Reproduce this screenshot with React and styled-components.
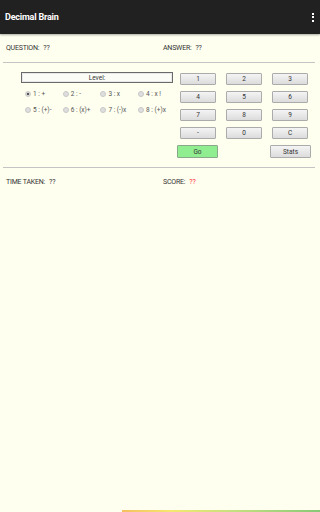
import React from 'react';
import styled, { createGlobalStyle } from 'styled-components';

const Global = createGlobalStyle`
    html, body {
        margin: 0;
        padding: 0;
        background: #fffff0;
    }
    body {
        font-family: Roboto, "Liberation Sans", sans-serif;
    }
`;

const Page = styled.div`
    width: 320px;
    height: 512px;
    display: flex;
    flex-direction: column;
    background: #fffff0;
    overflow: hidden;
`;

const AppBar = styled.div`
    height: 34px;
    flex: none;
    display: flex;
    align-items: center;
    justify-content: space-between;
    padding: 0 6px 0 5px;
    background: #212121;
    box-shadow: 0 1px 2px rgba(0, 0, 0, 0.35);
    color: #fff;
    font-size: 9px;
    font-weight: bold;
    letter-spacing: -0.2px;
`;

const Kebab = styled.div`
    display: flex;
    flex-direction: column;
    gap: 1.5px;
    span {
        width: 2px;
        height: 2px;
        background: #fff;
    }
`;

const InfoRow = styled.div`
    height: 28px;
    display: grid;
    grid-template-columns: 157px 1fr;
    align-items: center;
    padding-left: 6px;
    font-size: 7px;
    color: #333;
    letter-spacing: -0.2px;
`;

const Value = styled.span`
    margin-left: 4px;
    color: ${props => props.red ? '#ff3030' : '#333'};
`;

const Divider = styled.div`
    height: 1px;
    margin: 0 5px 0 3px;
    background: #c4c4c4;
`;

const Middle = styled.div`
    display: flex;
    padding: 9px 0 0 21px;
    height: 95px;
`;

const LevelPanel = styled.div`
    width: 152px;
`;

const LevelBox = styled.div`
    height: 9px;
    border: 1px solid #6a6a6a;
    box-shadow: inset 0 0 0 1px #e8e8e8;
    background: #fcfcf6;
    display: flex;
    align-items: center;
    justify-content: center;
    font-size: 6.5px;
    color: #333;
`;

const RadioGrid = styled.div`
    display: grid;
    grid-template-columns: repeat(4, 37.7px);
    grid-auto-rows: 16px;
    padding: 3px 0 0 4px;
    align-items: center;
`;

const Radio = styled.div`
    display: flex;
    align-items: center;
    gap: 2px;
    font-size: 6.5px;
    color: #555;
    white-space: nowrap;
`;

const Dot = styled.span`
    width: 4px;
    height: 4px;
    border-radius: 50%;
    border: 0.5px solid #c8c8c8;
    background: ${props => props.on ? 'radial-gradient(circle, #555 0 1.2px, #ddd 1.6px)' : '#dedede'};
`;

const Keypad = styled.div`
    margin-left: 4px;
    display: grid;
    grid-template-columns: repeat(3, 36px);
    column-gap: 10px;
    grid-auto-rows: 12px;
    row-gap: 6px;
    padding: 1px 0 0 3px;
`;

const Key = styled.div`
    display: flex;
    align-items: center;
    justify-content: center;
    border: 1px solid #ababab;
    border-radius: 1px;
    background: linear-gradient(#f4f4f4, #dcdcdc);
    font-size: 6.5px;
    color: #333;
    box-sizing: border-box;
`;

const Actions = styled.div`
    grid-column: 1 / -1;
    display: flex;
    justify-content: space-between;
    margin: 0 -3px 0 -3px;
    height: 13px;
    margin-top: 0px;
`;

const ActionKey = styled(Key)`
    width: 41px;
    height: 13px;
    background: ${props => props.go ? '#90ee90' : 'linear-gradient(#f4f4f4, #dcdcdc)'};
    border-color: ${props => props.go ? '#8aa88a' : '#ababab'};
`;

const Spacer = styled.div`
    flex: 1;
`;

const Progress = styled.div`
    height: 2px;
    margin-left: 122px;
    background: linear-gradient(90deg, #f5c060, #f5e870 25%, #c8e080 55%, #88c878);
`;

const levels = ['1 : +', '2 : -', '3 : x', '4 : x !', '5 : (+)-', '6 : (x)+', '7 : (-)x', '8 : (+)x'];
const keys = ['1', '2', '3', '4', '5', '6', '7', '8', '9', '-', '0', 'C'];

export default function App() {
    return (
        <Page>
            <Global />
            <AppBar>
                <span>Decimal Brain</span>
                <Kebab><span /><span /><span /></Kebab>
            </AppBar>
            <InfoRow>
                <span>QUESTION:<Value>??</Value></span>
                <span>ANSWER:<Value>??</Value></span>
            </InfoRow>
            <Divider />
            <Middle>
                <LevelPanel>
                    <LevelBox>Level:</LevelBox>
                    <RadioGrid>
                        {levels.map((l, i) => (
                            <Radio key={l}><Dot on={i === 0} />{l}</Radio>
                        ))}
                    </RadioGrid>
                </LevelPanel>
                <Keypad>
                    {keys.map(k => <Key key={k}>{k}</Key>)}
                    <Actions>
                        <ActionKey go>Go</ActionKey>
                        <ActionKey>Stats</ActionKey>
                    </Actions>
                </Keypad>
            </Middle>
            <Divider />
            <InfoRow>
                <span>TIME TAKEN:<Value>??</Value></span>
                <span>SCORE:<Value red>??</Value></span>
            </InfoRow>
            <Spacer />
            <Progress />
        </Page>
    );
}
